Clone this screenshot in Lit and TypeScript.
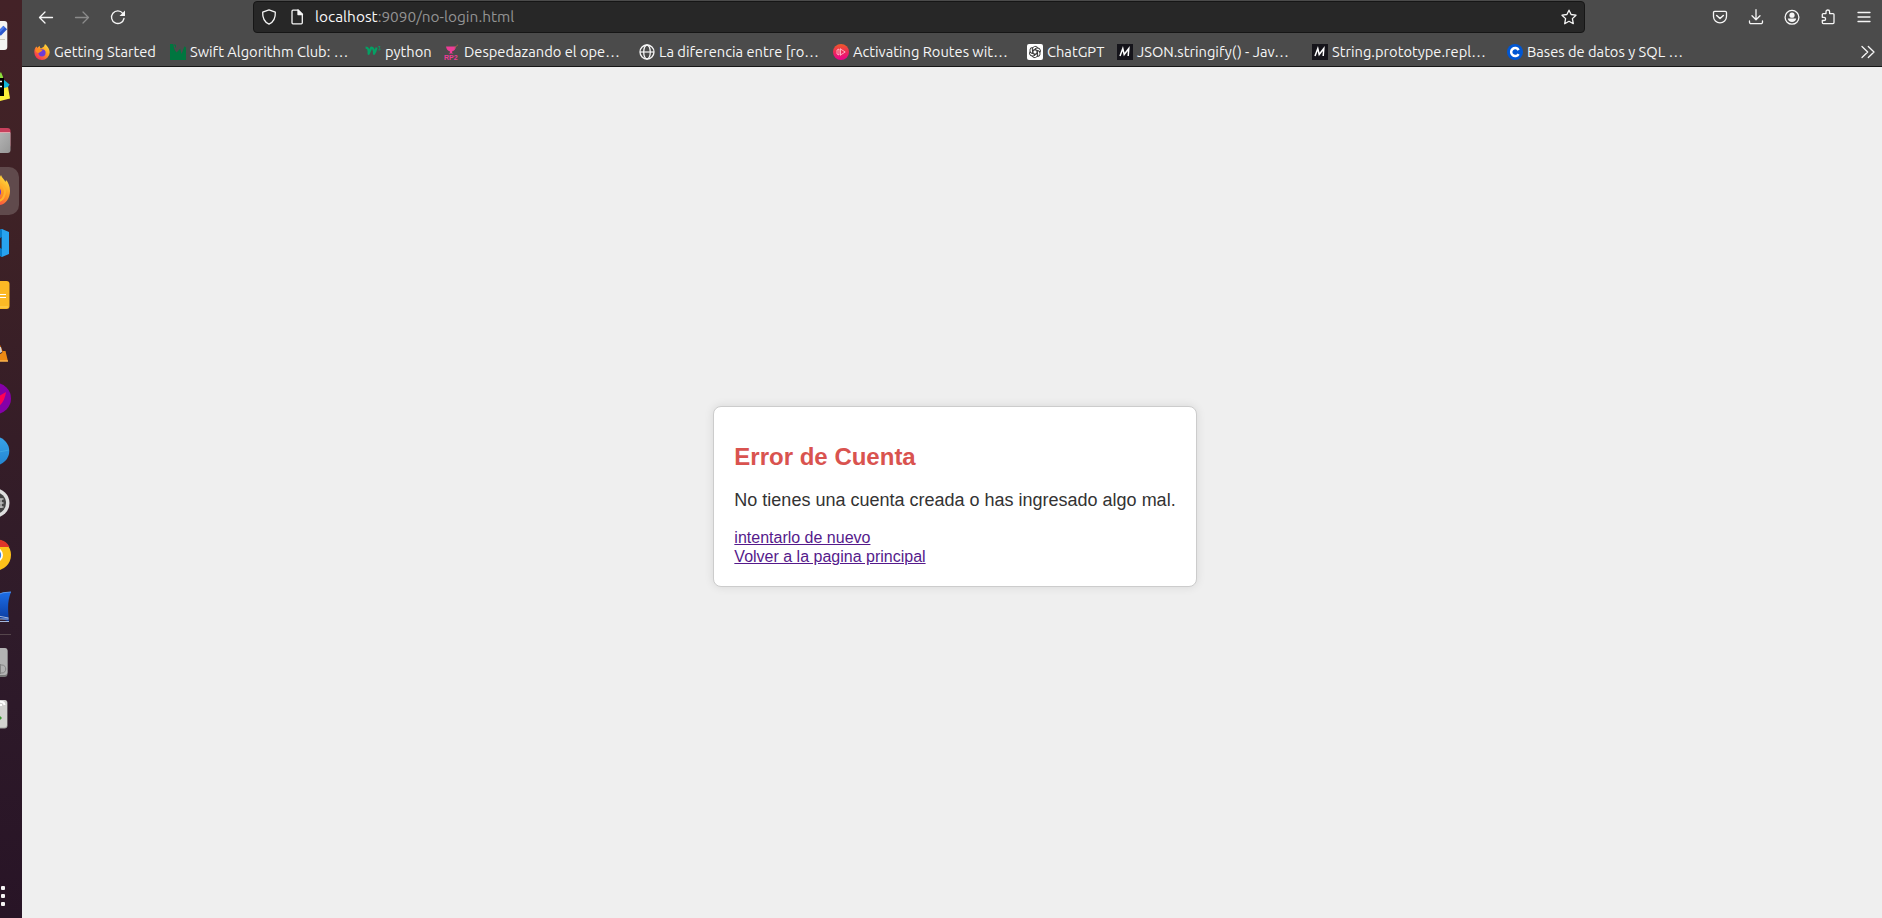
import { LitElement, html, svg, css } from "lit";
import { customElement } from "lit/decorators.js";

/* ---- launcher icons: each slot shows the strip of the launcher from its start to its end ---- */
const dockSlots = [
  { from: 0, to: 61, art: svg`<rect x="-22" y="21" width="29.3" height="29" rx="3" fill="#f3f3f1"/><path d="M-3 39.5H5" stroke="#c9c9bd"/><path d="M-1 34L5.3 27.4" stroke="#2c59cf" stroke-width="5"/><path d="M-1 32L4 26.8" stroke="#4b7ae8" stroke-width="2"/>` },
  { from: 61, to: 115, art: svg`<path d="M-4 78L1 72L3 77V90H-4z" fill="#8bdc3c"/><path d="M3 79L9.6 84.5L6 90L3 89z" fill="#12b5d8"/><path d="M-4 90L8 87L10 98.500L-4 102z" fill="#fcee3a"/><rect x="-18" y="78" width="22" height="18" fill="#000"/><path d="M0 81.500H2M0 86.500H2" stroke="#fff" stroke-width="1.500"/>` },
  { from: 115, to: 165, art: svg`<rect x="-15" y="128" width="25.5" height="20" rx="3" fill="#c7405c"/><path d="M-5 132.500H10.500V150a3 3 0 0 1-3 3H-5z" fill="url(#silver)"/><path d="M-5 132.500H10" stroke="#e1a6ac"/>` },
  { from: 165, to: 217, art: svg`<rect x="-29" y="167" width="48" height="48" rx="10" fill="#604a4c"/><path d="M-20 182V205H0C6 204 10 198 10 191C10 186 8 182 6 180L5.500 182C4 179 2 178 1 175L-2 180z" fill="url(#flame)"/><circle cx="-5" cy="192" r="6" fill="#6b37d9"/><path d="M1 184C5 187 6 192 4 196C3 200 0 201-3 202" stroke="#ffb32c" stroke-width="2" fill="none"/>` },
  { from: 217, to: 268, art: svg`<path d="M-2 230.500L2 229L9 232V254L2 257L-2 255z" fill="#27a3ef"/><path d="M-2 231L2 229V257L-2 254V249L0 248V239L-2 237z" fill="#087dca"/><path d="M-1 239L1.500 237V249L-1 247z" fill="#33202a"/>` },
  { from: 268, to: 320, art: svg`<rect x="-20" y="281" width="29.500" height="28" rx="3" fill="#fbb925"/><path d="M-20 307H8" stroke="#ffd45d"/><path d="M0 294.500H6M0 297.500H6" stroke="#fff"/>` },
  { from: 320, to: 372, art: svg`<path d="M-2 340L3 352H-2z" fill="#e86b00"/><path d="M-2 347L1 347L2 352L-2 354z" fill="#d5d4d1"/><path d="M-3 354Q2 355 3 351H5.500L8 361.500H-3z" fill="#ed8a14"/><path d="M-3 361H8" stroke="#ffc568"/>` },
  { from: 372, to: 425, art: svg`<circle cx="-4.500" cy="398.500" r="15.500" fill="#8500a8"/><path d="M6 392L-4 398V408C1 406 5 400 6 392z" fill="#ff0054"/>` },
  { from: 425, to: 477, art: svg`<circle cx="-5" cy="451" r="14.300" fill="url(#sky)"/><path d="M-1 452L9 450" stroke="#3fa7e4"/>` },
  { from: 477, to: 529, art: svg`<circle cx="-5" cy="503" r="14.500" fill="#dedede"/><circle cx="-5" cy="503" r="11" fill="#444"/><path d="M0 499H3.500M0 503H3.500M0 507H3.500M1 499V508" stroke="#bcbcbc" stroke-width="1.500"/>` },
  { from: 529, to: 581, art: svg`<circle cx="-4.500" cy="555" r="15.500" fill="#fdc21a"/><path d="M-8 540C0 538 7 541 9.500 547H-8z" fill="#df3529"/><circle cx="-4.500" cy="555" r="7.500" fill="#fff"/><circle cx="-4.500" cy="555" r="5.700" fill="#377fe5"/>` },
  { from: 581, to: 628, art: svg`<path d="M-3 595Q2 592 11 592C7 602 8 610 9 621.500L-3 617z" fill="url(#fin)"/><path d="M-3 595Q2 592 11 592" stroke="#5796ee" fill="none"/><path d="M-2 616L8.500 618M-2 619H8.500M-2 621.500H9" stroke="#a5b7db" fill="none"/>` },
  { from: 628, to: 690, art: svg`<path d="M0 634.500H11" stroke="#55464c"/><rect x="-20" y="648" width="27.500" height="29" rx="3" fill="#787878"/><rect x="-20" y="648" width="27.500" height="27" rx="3" fill="#b3b3b3"/><path d="M0 665H2C7 665 7 673 2 673H0M.5 664V674" stroke="#858585" fill="none"/>` },
  { from: 690, to: 740, art: svg`<rect x="-20" y="700" width="27.500" height="28.500" rx="3" fill="#a4a4a1"/><rect x="-20" y="700" width="27" height="27.500" rx="3" fill="#d2d2cf"/><path d="M-1 702Q4 701 4.500 705M-1 705H2" stroke="#fff" fill="none" stroke-width="2"/><path d="M-1 715L2 718L-1 721z" fill="#3c9b32"/>` },
];

/* ---- toolbar glyphs on a 16px grid ---- */
const glyph = {
  back: svg`<path d="M14.500 8.500H1.500M7 3L1.500 8.500L7 14"/>`,
  forward: svg`<path d="M1.500 8.500H14.500M9 3L14.500 8.500L9 14"/>`,
  reload: svg`<path d="M14 9.500A6.300 6.300 0 1 1 12.800 4.300"/><path d="M15 1.500V7H9.500z" fill="currentColor" stroke="none"/>`,
  shield: svg`<path d="M8 .9L14.300 3.200C14.600 8.500 12.500 13 8 15.200C3.500 13 1.400 8.500 1.700 3.200z"/>`,
  page: svg`<path d="M3 2.200a1 1 0 0 1 1-1H9.200L13.300 5.300V13.800a1 1 0 0 1-1 1H4a1 1 0 0 1-1-1z"/><path d="M9 1V5.500H13.500z" fill="currentColor"/>`,
  star: svg`<path d="M8 1.200L10.100 5.500L15 6.200L11.400 9.600L12.300 14.700L8 12.300L3.700 14.700L4.600 9.600L1 6.200L5.900 5.500z"/>`,
  pocket: svg`<path d="M1.500 3.600a1.200 1.200 0 0 1 1.200-1.200H13.300a1.200 1.200 0 0 1 1.200 1.200V7.500a6.500 6.300 0 0 1-13 0z"/><path d="M4.700 6.500L8 9.500L11.300 6.500" stroke-width="1.600"/>`,
  download: svg`<path d="M8 .7V10.500M4 6.800L8 10.700L12 6.800M1.500 12V13.200a1.500 1.500 0 0 0 1.500 1.500H13a1.500 1.500 0 0 0 1.500-1.500V12"/>`,
  account: svg`<circle cx="8" cy="8.300" r="6.900"/><circle cx="8" cy="6.200" r="2.600" fill="currentColor" stroke="none"/><path d="M3.800 9.600H12.200C12 12 10.200 13 8 13S4 12 3.800 9.600z" fill="currentColor" stroke="none"/>`,
  extension: svg`<path d="M6 4.600V2.800a1.800 1.800 0 0 1 3.600 0V4.600H13a1 1 0 0 1 1 1V13.600a1 1 0 0 1-1 1H3.300a1 1 0 0 1-1-1V11.500H4a1.600 1.600 0 0 0 0-3.200H2.300V5.600a1 1 0 0 1 1-1z"/>`,
  menu: svg`<path d="M2 3.500H14M2 8H14M2 12.500H14"/>`,
  more: svg`<path d="M2 2.500L7.700 8L2 13.500M8.300 2.500L14 8L8.300 13.500"/>`,
};

/* ---- bookmark favicons ---- */
const fav = {
  firefox: svg`<path d="M8 16A7.700 7.700 0 0 1 .3 8C.3 5 1.500 3.500 2.500 2.500L3.500 4C4 3 5 2 6 2C5.500 3 6 4 7 4.500L10 2.500L11 0C13 2 15.700 4.500 15.700 8.500A7.700 7.700 0 0 1 8 16z" fill="url(#flame)"/><circle cx="8" cy="8.800" r="3.600" fill="#6f3bd8"/><path d="M1.500 6C4 4 6 6 8.500 6C8 8 5.500 7.500 5 9C3 9 1.500 8 1.500 6z" fill="#ff8c1f"/>`,
  swift: svg`<path d="M0 0H3L4.500 5.500L6.500 8.500L10.200 4.700L11.500 10L14.500 2.200L16 3.500V16H0z" fill="#00763f"/><path d="M3.500 1H5.500V3.500" fill="none" stroke="#00763f"/>`,
  w3: svg`<path d="M.6 3.600Q4.200 3.500 3.600 9.800Q5.200 6.500 6.200 3.600Q9.300 3.800 9 9.800Q10.500 8 11.600 3.600" stroke="#05a064" stroke-width="2.200" fill="none" stroke-linejoin="round"/><path d="M13.200 2.500H15L14 4Q16 4.500 14.800 6L13.200 5.800" stroke="#05a064" stroke-width=".8" fill="none"/>`,
  rp2: svg`<path d="M2 2.500H12Q11.500 6.500 8 7.500V8.500L9.500 9.500H4.500L6 8.500V7.500Q2.500 6.500 2 2.500z" fill="#ed3c96"/><path d="M10.500 4L14 .7" stroke="#9a6841"/><text x="0" y="15.800" class="tiny">RP2</text>`,
  globe: svg`<g fill="none" stroke="#f5f5f5" stroke-width="1.300"><circle cx="8" cy="8" r="7"/><ellipse cx="8" cy="8" rx="3.300" ry="7"/><path d="M1 8H15" stroke-width="1.200"/></g>`,
  route: svg`<circle cx="8" cy="8" r="8" fill="url(#rose)"/><path d="M4 6V10L6 11V5zM7.500 4.500V11.500M7.500 5L12.200 8L7.500 11" fill="none" stroke="#ffb9cb" stroke-width=".9"/>`,
  gpt: svg`<rect width="16" height="16" rx="2" fill="#fff"/><g fill="none" stroke="#333" stroke-width=".9">${[0, 60, 120, 180, 240, 300].map(a => svg`<path transform="rotate(${a} 8 8)" d="M8 5.800L10.500 7.200V10.400M5.500 4.800A2.900 2.900 0 0 1 10.600 3.400L7.900 5"/>`)}</g>`,
  mdn: svg`<rect width="16" height="16" fill="#15141a"/><path d="M3 12L5.800 4.500L7.200 10.500L11.800 4.500L11.200 12" fill="none" stroke="#fff" stroke-width="1.500"/>`,
  coursera: svg`<circle cx="8" cy="8" r="8" fill="#0056d2"/><path d="M11.600 10A4 4 0 1 1 11.600 6" fill="none" stroke="#fff" stroke-width="2.500"/>`,
};

/* w: label width, gap: space before the next favicon */
const bookmarks = [
  { icon: fav.firefox, text: "Getting Started", w: 104, gap: 12 },
  { icon: fav.swift, text: "Swift Algorithm Club: …", w: 161, gap: 14 },
  { icon: fav.w3, text: "python", w: 48, gap: 11 },
  { icon: fav.rp2, text: "Despedazando el ope…", w: 159, gap: 16 },
  { icon: fav.globe, text: "La diferencia entre [ro…", w: 161, gap: 13 },
  { icon: fav.route, text: "Activating Routes wit…", w: 158, gap: 16 },
  { icon: fav.gpt, text: "ChatGPT", w: 59, gap: 11 },
  { icon: fav.mdn, text: "JSON.stringify() - Jav…", w: 160, gap: 15 },
  { icon: fav.mdn, text: "String.prototype.repl…", w: 160, gap: 15 },
  { icon: fav.coursera, text: "Bases de datos y SQL …", w: 160, gap: 0 },
];

const tool = (g: unknown, cls = "") => html`<span class="tool ${cls}"><svg class="glyph" viewBox="0 0 16 16">${g}</svg></span>`;

const paints = () => svg`<defs>
  <linearGradient id="flame" x1="1" y1="0" x2=".2" y2="1"><stop offset="0" stop-color="#fff04a"/><stop offset=".45" stop-color="#ff9d22"/><stop offset="1" stop-color="#f5225c"/></linearGradient>
  <linearGradient id="silver" x1="0" y1="0" x2="1" y2="1"><stop offset="0" stop-color="#b9b9b9"/><stop offset="1" stop-color="#969696"/></linearGradient>
  <linearGradient id="sky" x1="0" y1="0" x2="0" y2="1"><stop offset="0" stop-color="#39a3e8"/><stop offset="1" stop-color="#2386d2"/></linearGradient>
  <linearGradient id="fin" x1="0" y1="0" x2="0" y2="1"><stop offset="0" stop-color="#1c6ee8"/><stop offset="1" stop-color="#0b3a9d"/></linearGradient>
  <linearGradient id="rose" x1="0" y1="0" x2="0" y2="1"><stop offset="0" stop-color="#f05a28"/><stop offset=".5" stop-color="#ed2a58"/><stop offset="1" stop-color="#ec0090"/></linearGradient>
</defs>`;

@customElement("app-root")
export class AppRoot extends LitElement {
  static styles = css`
    :host { display: flex; width: 1882px; height: 918px; overflow: hidden; background: #efefef; }
    svg { display: block; flex: none; }
    .dock { width: 22px; flex: none; display: flex; flex-direction: column;
      background: linear-gradient(#432227 0, #3f2226 200px, #351d27 440px, #2f1b2a 620px, #281426 918px); }
    .dots { margin-top: auto; padding: 0 0 12px 1px; display: flex; flex-direction: column; gap: 4px; }
    .dot { width: 4px; height: 4px; border-radius: 1px; background: #f5f3f4; }
    .window { flex: 1; min-width: 0; display: flex; flex-direction: column; }
    .chrome { flex: none; height: 66px; background: #4b4b4b; border-bottom: 1px solid #161616; color: #f6f6f6;
      font-family: Ubuntu, "Noto Sans", sans-serif; font-size: 14.667px; }
    .nav { display: flex; align-items: center; height: 34px; }
    .tool { width: 36px; display: flex; justify-content: center; flex: none; }
    .dim { color: #8b8b8b; }
    .glyph { width: 16px; height: 16px; fill: none; stroke: currentColor; stroke-width: 1.3; stroke-linejoin: round; stroke-linecap: round; }
    .left { display: flex; padding-left: 6px; width: 225px; flex: none; }
    .url { box-sizing: border-box; width: 1332px; height: 32px; flex: none; border: 1px solid #161616; border-radius: 4px; background: #272727;
      display: flex; align-items: center; padding: 0 7px; }
    .slot { width: 16px; margin-right: 12px; }
    .address { flex: 1; margin-left: -2px; color: #939393; font-size: 15.4px; line-height: 30px; white-space: nowrap; }
    .host { color: #f8f8f8; }
    .right { display: flex; margin-left: 116.500px; }
    .marks { display: flex; align-items: center; height: 34px; padding: 2px 6px 0 12px; box-sizing: border-box; }
    .mark { display: flex; align-items: center; flex: none; }
    .label { margin-left: 4px; white-space: nowrap; line-height: 20px; }
    .more { margin-left: auto; }
    .fav { width: 16px; height: 16px; }
    .tiny { font: 900 7px "Liberation Sans", sans-serif; fill: #ed3c96; }
    .page { flex: 1; display: flex; align-items: center; justify-content: center; padding: 8px 0 0 6px;
      font-family: "Liberation Sans", Arial, sans-serif; }
    .card { box-sizing: border-box; height: 181px; padding: 20px; border: 1px solid #ccc; border-radius: 8px; background: #fff; box-shadow: 0 0 10px rgba(0,0,0,.1); }
    h2 { margin: 16px 0 0; font-size: 24px; line-height: 27px; color: #d9534f; }
    p { margin: 20px 0 17px; font-size: 18px; line-height: 21px; color: #333; white-space: nowrap; }
    a { display: block; width: max-content; font-size: 16px; line-height: 19px; color: #551a8b; text-decoration: underline; }
  `;

  render() {
    return html`
      <aside class="dock">
        ${dockSlots.map(s => html`<svg width="22" height=${s.to - s.from} viewBox="0 ${s.from} 22 ${s.to - s.from}">${paints()}${s.art}</svg>`)}
        <div class="dots"><i class="dot"></i><i class="dot"></i><i class="dot"></i></div>
      </aside>
      <div class="window">
        <header class="chrome">
          <div class="nav">
            <div class="left">${tool(glyph.back)}${tool(glyph.forward, "dim")}${tool(glyph.reload)}</div>
            <div class="url">
              <span class="slot"><svg class="glyph" viewBox="0 0 16 16">${glyph.shield}</svg></span>
              <span class="slot"><svg class="glyph" viewBox="0 0 16 16">${glyph.page}</svg></span>
              <span class="address"><span class="host">localhost</span>:9090/no-login.html</span>
              <svg class="glyph" viewBox="0 0 16 16">${glyph.star}</svg>
            </div>
            <div class="right">${[glyph.pocket, glyph.download, glyph.account, glyph.extension, glyph.menu].map(g => tool(g))}</div>
          </div>
          <div class="marks">
            ${bookmarks.map(b => html`<div class="mark" style="margin-right:${b.gap}px">
              <svg class="fav" viewBox="0 0 16 16">${paints()}${b.icon}</svg>
              <span class="label" style="width:${b.w}px">${b.text}</span></div>`)}
            <svg class="glyph more" viewBox="0 0 16 16">${glyph.more}</svg>
          </div>
        </header>
        <main class="page">
          <section class="card">
            <h2>Error de Cuenta</h2>
            <p>No tienes una cuenta creada o has ingresado algo mal.</p>
            <a>intentarlo de nuevo</a>
            <a>Volver a la pagina principal</a>
          </section>
        </main>
      </div>`;
  }
}
